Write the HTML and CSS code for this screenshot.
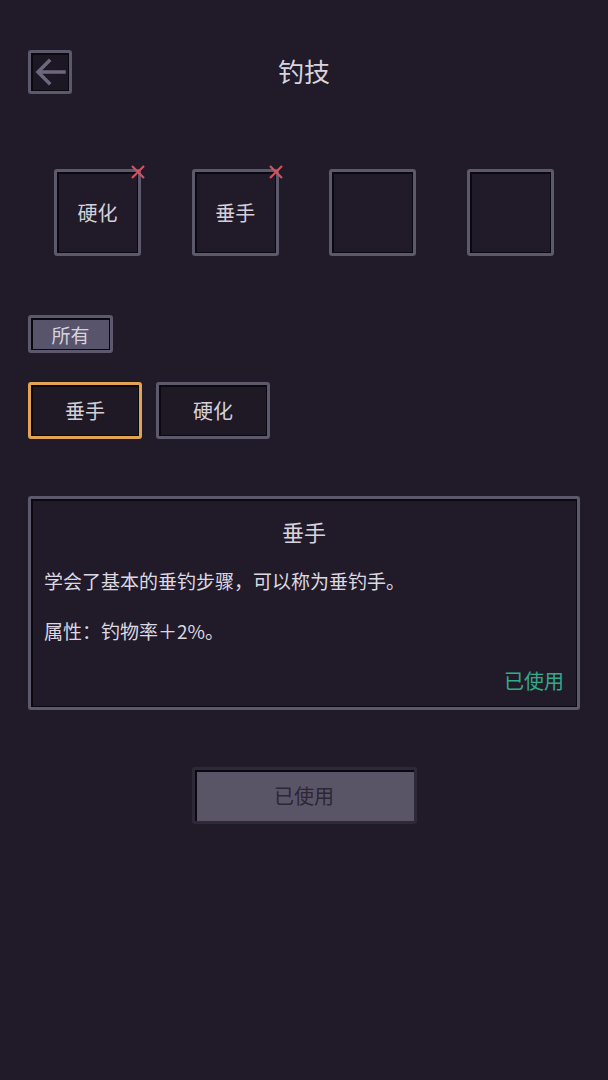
FILE: index.html
```html
<!DOCTYPE html>
<html lang="zh-CN">
<head>
	<meta charset="UTF-8">
	<meta name="viewport" content="width=device-width, initial-scale=1.0">
	<title>钓技</title>
	<link rel="stylesheet" href="styles.css">
</head>
<body>
	<div class="page">
		<div class="header">
			<button class="back-button">
				<svg width="34" height="34" viewBox="0 0 34 34">
					<path d="M31 17 H6 M16 6 L5 17 L16 28" fill="none" stroke="#6c687e" stroke-width="3.5" stroke-linecap="square"/>
				</svg>
			</button>
			<div class="title">钓技</div>
			<div></div>
		</div>

		<div class="slots">
			<div class="slot">硬化
				<svg class="remove" width="16" height="16" viewBox="0 0 16 16">
					<path d="M2 2 L14 14 M14 2 L2 14" stroke="#d4515d" stroke-width="2.2"/>
				</svg>
			</div>
			<div class="slot">垂手
				<svg class="remove" width="16" height="16" viewBox="0 0 16 16">
					<path d="M2 2 L14 14 M14 2 L2 14" stroke="#d4515d" stroke-width="2.2"/>
				</svg>
			</div>
			<div class="slot"></div>
			<div class="slot"></div>
		</div>

		<div class="filters">
			<button class="tag active">所有</button>
		</div>

		<div class="skills">
			<button class="skill selected">垂手</button>
			<button class="skill">硬化</button>
		</div>

		<div class="detail">
			<div class="detail-title">垂手</div>
			<p class="detail-text">学会了基本的垂钓步骤，可以称为垂钓手。</p>
			<p class="detail-text">属性：钓物率＋2%。</p>
			<div class="detail-status">已使用</div>
		</div>

		<div class="actions">
			<button class="use-button" disabled>已使用</button>
		</div>
	</div>
</body>
</html>
```

FILE: styles.css
```css
body {
	margin: 0;
	background-color: #211b29;
	color: #d8d4de;
	font-family: "Noto Sans CJK SC", "Noto Sans", sans-serif;
}

button {
	font-family: inherit;
	cursor: pointer;
}

.page {
	width: 608px;
	height: 1080px;
	padding: 50px 28px 0;
	box-sizing: border-box;
}

/* pixel frame: grey outline with a dark inner edge */
.back-button,
.slot,
.tag,
.skill,
.detail,
.use-button {
	border: 3px solid #5d596c;
	border-radius: 3px;
	box-shadow: inset 2px 2px 0 #0b0910, inset -1px -1px 0 #0b0910;
	box-sizing: border-box;
}

.header {
	display: grid;
	grid-template-columns: 44px 1fr 44px;
	align-items: center;
	height: 44px;
}

.back-button {
	width: 44px;
	height: 44px;
	padding: 0;
	background-color: #1c1722;
	display: flex;
	align-items: center;
	justify-content: center;
}

.title {
	text-align: center;
	font-size: 26px;
	line-height: 44px;
	margin-top: -2px;
}

.slots {
	display: flex;
	justify-content: space-between;
	padding: 0 26px;
	margin-top: 75px;
}

.slot {
	position: relative;
	width: 87px;
	height: 87px;
	display: flex;
	align-items: center;
	justify-content: center;
	font-size: 20px;
	color: #d4d0da;
}

.remove {
	position: absolute;
	top: -8px;
	right: -8px;
}

.filters {
	display: flex;
	margin-top: 59px;
}

.tag {
	width: 85px;
	height: 38px;
	padding: 0;
	font-size: 19px;
	color: #d6d2de;
	background-color: #58546c;
}

.skills {
	display: flex;
	gap: 14px;
	margin-top: 29px;
}

.skill {
	width: 114px;
	height: 57px;
	padding: 0;
	font-size: 20px;
	color: #d4d0da;
	background-color: #1f1926;
}

.skill.selected {
	border-color: #e2a452;
}

.detail {
	margin-top: 57px;
	height: 214px;
	padding: 14px 13px 0;
	display: flex;
	flex-direction: column;
}

.detail-title {
	text-align: center;
	font-size: 22px;
	line-height: 36px;
}

.detail-text {
	margin: 14px 0 0;
	font-size: 19px;
	line-height: 36px;
	color: #dcd8e2;
}

.detail-text + .detail-text {
	margin-top: 14px;
}

.detail-status {
	margin-top: auto;
	margin-bottom: 12px;
	text-align: right;
	font-size: 20px;
	color: #33a98b;
}

.actions {
	display: flex;
	justify-content: center;
	margin-top: 57px;
}

.use-button {
	width: 225px;
	height: 57px;
	padding: 0;
	font-size: 20px;
	color: #2c2636;
	background-color: #5a5566;
	border-color: #2e2838;
	box-shadow: inset 2px 2px 0 #0b0910;
	cursor: default;
}
```
